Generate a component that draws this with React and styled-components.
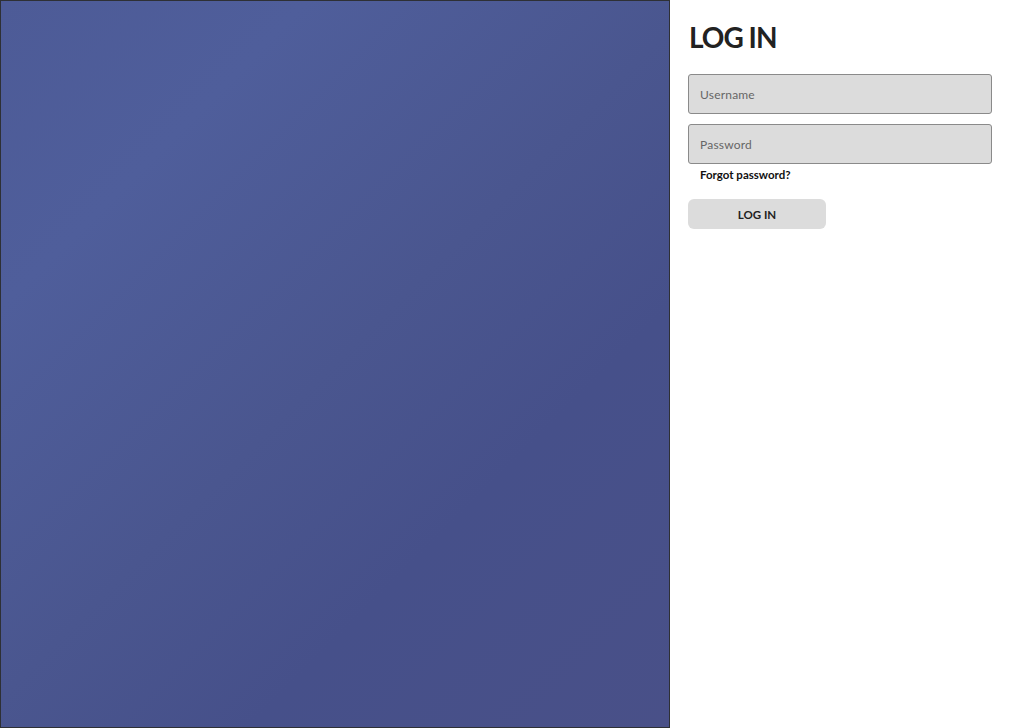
import React from "react";
import styled, { createGlobalStyle } from "styled-components";

const Global = createGlobalStyle`
  html, body { margin: 0; padding: 0; background: #fff; }
  body { font-family: Lato, "Noto Sans", sans-serif; }
  * { box-sizing: border-box; }
`;

const Page = styled.div`
  display: flex;
  width: 1024px;
  height: 728px;
  overflow: hidden;
`;

const Hero = styled.div`
  width: 670px;
  height: 728px;
  border: 1px solid #2e3035;
  background: linear-gradient(135deg, #4d5b97 0%, #4f5e9b 22%, #4a568f 50%, #46508a 70%, #495088 100%);
  flex-shrink: 0;
`;

const Side = styled.div`
  flex: 1;
  padding: 20px 32px 0 18px;
  display: flex;
  flex-direction: column;
`;

const Title = styled.h1`
  margin: 0 0 0 1px;
  font-family: Lato, sans-serif;
  font-weight: 700;
  font-size: 28px;
  line-height: 34px;
  letter-spacing: -1px;
  color: #222;
`;

const Form = styled.form`
  margin-top: 20px;
  display: flex;
  flex-direction: column;
`;

const Input = styled.input`
  width: 304px;
  height: 40px;
  border: 1px solid #8a8a8a;
  border-radius: 3px;
  background: #dcdcdc;
  padding: 0 11px;
  font-family: Lato, sans-serif;
  font-size: 12px;
  letter-spacing: 0.2px;
  color: #333;
  margin-bottom: ${(p) => p.$gap || 0}px;
  outline: none;
  &::placeholder { color: #666; }
`;

const Forgot = styled.a`
  margin: 4px 0 0 12px;
  font-family: Lato, sans-serif;
  font-weight: 700;
  font-size: 11.5px;
  line-height: 14px;
  color: #111;
  text-decoration: none;
`;

const Button = styled.button`
  margin-top: 17px;
  width: 138px;
  height: 30px;
  border: none;
  border-radius: 6px;
  background: #dcdcdc;
  font-family: Lato, sans-serif;
  font-weight: 700;
  font-size: 11.5px;
  color: #222;
  padding: 0;
  cursor: pointer;
`;

export default function App() {
  return (
    <>
      <Global />
      <Page>
        <Hero />
        <Side>
          <Title>LOG IN</Title>
          <Form onSubmit={(e) => e.preventDefault()}>
            <Input placeholder="Username" $gap={10} />
            <Input placeholder="Password" type="password" />
            <Forgot href="#">Forgot password?</Forgot>
            <Button type="submit">LOG IN</Button>
          </Form>
        </Side>
      </Page>
    </>
  );
}
